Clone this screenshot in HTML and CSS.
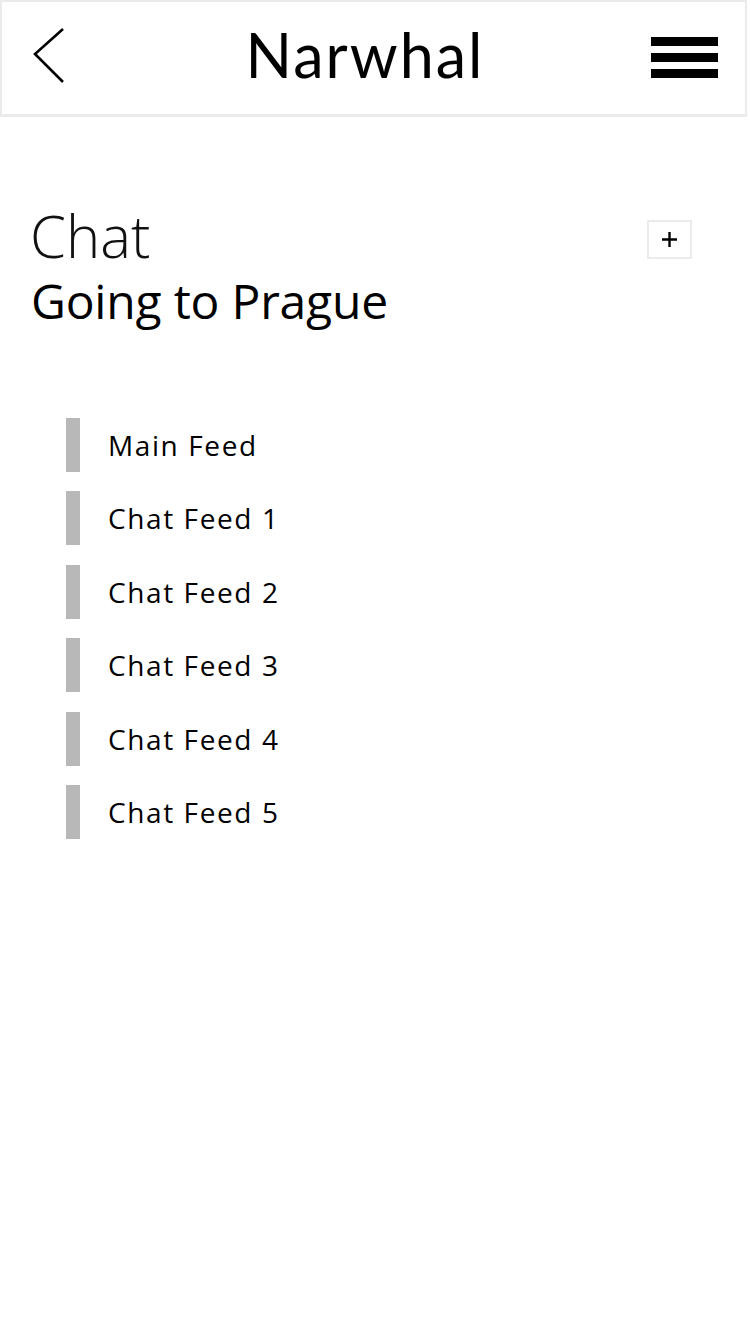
FILE: index.html
```html
<!DOCTYPE html>
<html>
<head>
<meta charset="utf-8">
<link rel="stylesheet" href="styles.css">
</head>
<body>
<header class="topbar">
  <button class="back" aria-label="Back">
    <svg width="40" height="60" viewBox="0 0 40 60"><polyline points="30,2 2,27 30,55" fill="none" stroke="#000" stroke-width="2.6"/></svg>
  </button>
  <h1 class="brand">Narwhal</h1>
  <button class="menu" aria-label="Menu"><span></span><span></span><span></span></button>
</header>
<main class="content">
  <section class="title-row">
    <div class="titles">
      <div class="kicker">Chat</div>
      <h2 class="trip">Going to Prague</h2>
    </div>
    <button class="add" aria-label="Add">
      <svg width="15" height="15" viewBox="0 0 15 15"><path d="M7.5 0V15M0 7.5H15" stroke="#000" stroke-width="2.4"/></svg>
    </button>
  </section>
  <ul class="feeds">
    <li class="feed"><span class="bar"></span><span class="label">Main Feed</span></li>
    <li class="feed"><span class="bar"></span><span class="label">Chat Feed 1</span></li>
    <li class="feed"><span class="bar"></span><span class="label">Chat Feed 2</span></li>
    <li class="feed"><span class="bar"></span><span class="label">Chat Feed 3</span></li>
    <li class="feed"><span class="bar"></span><span class="label">Chat Feed 4</span></li>
    <li class="feed"><span class="bar"></span><span class="label">Chat Feed 5</span></li>
  </ul>
</main>
</body>
</html>
```
FILE: styles.css
```css
* { box-sizing: border-box; }
html, body { margin: 0; padding: 0; background: #fff; }
body { width: 750px; font-family: "Open Sans", "Liberation Sans", sans-serif; color: #000; }

.topbar {
  width: 747px;
  height: 117px;
  border: 2px solid #ebebeb;
  border-bottom-width: 3px;
  display: flex;
  align-items: center;
  justify-content: space-between;
  padding: 0 27px 0 31px;
}
.back { background: none; border: 0; padding: 0; width: 40px; height: 60px; display: block; margin-top: -2px; }
.back svg { display: block; }
.brand {
  margin: 0;
  font-family: "Lato", "Open Sans", sans-serif;
  font-weight: 400;
  font-size: 61px;
  line-height: 1;
  letter-spacing: 2px;
  margin-left: 6px;
  margin-top: -8px;
}
.menu {
  background: none; border: 0; padding: 0;
  width: 67px; display: flex; flex-direction: column; gap: 7px;
  margin-top: -2px;
}
.menu span { display: block; height: 9px; background: #000; }

.content { padding: 0 0 0 31px; }
.title-row {
  display: flex;
  justify-content: space-between;
  align-items: flex-start;
  padding-top: 84px;
  padding-right: 58px;
}
.kicker {
  font-weight: 300;
  font-size: 58px;
  line-height: 70px;
  color: #111;
  margin-left: -1px;
}
.trip {
  margin: 0;
  font-weight: 400;
  font-size: 48px;
  line-height: 60px;
  letter-spacing: -0.2px;
}
.add {
  width: 45px; height: 39px;
  margin-top: 19px;
  border: 2px solid #ebebeb;
  background: #fff;
  padding: 0;
  display: flex; align-items: center; justify-content: center;
}
.add svg { display: block; }

.feeds {
  list-style: none;
  margin: 87px 0 0 0;
  padding: 0 0 0 35px;
  display: flex;
  flex-direction: column;
  gap: 19.4px;
}
.feed { display: flex; align-items: center; height: 54px; }
.bar { width: 14px; height: 54px; background: #b8b8b8; flex: none; }
.label {
  margin-left: 28px;
  font-size: 28px;
  letter-spacing: 1.6px;
  line-height: 1;
  margin-top: 0;
}
```
